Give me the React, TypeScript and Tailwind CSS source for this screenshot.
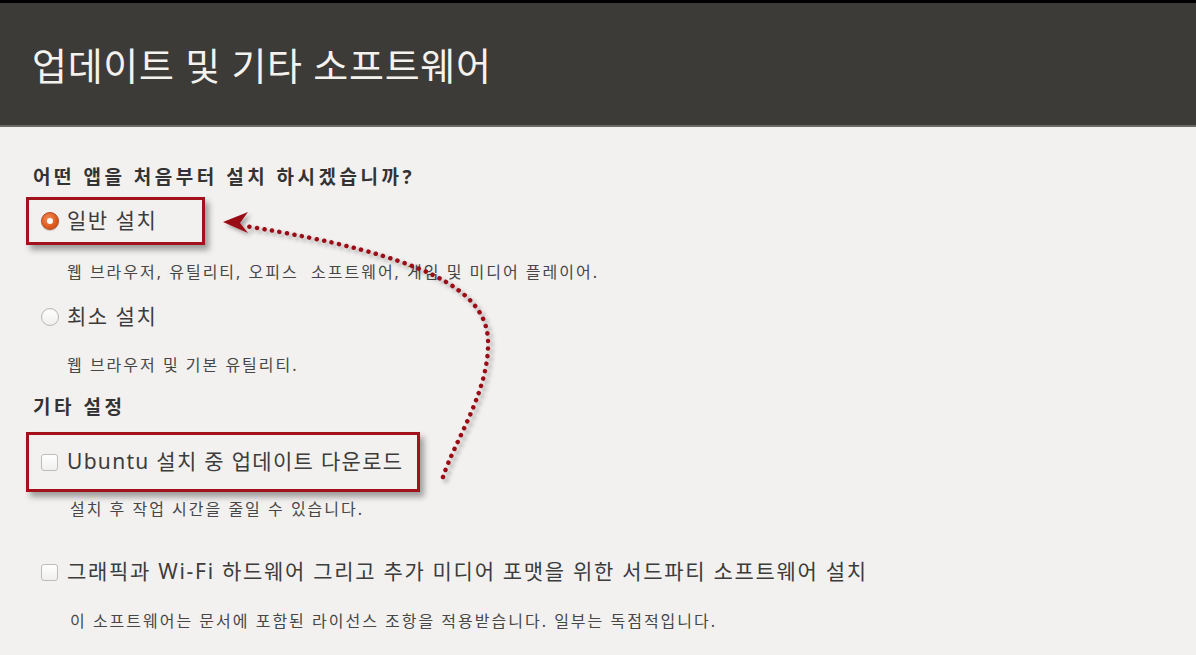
import React from "react";

const FONT = { fontFamily: '"Noto Sans", "Noto Sans CJK KR", sans-serif' };

function RadioOn() {
  return (
    <span className="flex h-[18px] w-[18px] shrink-0 items-center justify-center rounded-full border border-[#b8481e] bg-[radial-gradient(circle_at_40%_35%,#f38a55,#dd5a1f_60%,#c0461a)] shadow-[0_1px_1px_rgba(0,0,0,0.2)]">
      <span className="h-[6px] w-[6px] rounded-full bg-white" />
    </span>
  );
}

function RadioOff() {
  return (
    <span className="h-[18px] w-[18px] shrink-0 rounded-full border border-[#b9b8b5] bg-[linear-gradient(#ffffff,#efefee)] shadow-[inset_0_1px_1px_rgba(0,0,0,0.05)]" />
  );
}

function Check() {
  return (
    <span className="h-[17px] w-[17px] shrink-0 rounded-[3px] border border-[#bdbcb9] bg-[linear-gradient(#ffffff,#efefee)]" />
  );
}

export default function App() {
  return (
    <div
      className="relative h-[655px] w-[1196px] overflow-hidden bg-[#f2f1f0] text-[#3c3c3c]"
      style={FONT}
    >
      <header className="flex h-[127px] items-center border-t-[3px] border-b-[2px] border-t-black border-b-[#6a6965] bg-[#3c3b37] pl-[32px]">
        <h1 className="mt-[2px] text-[38px] font-normal tracking-[0.7px] text-[#f4f2ee]">
          업데이트 및 기타 소프트웨어
        </h1>
      </header>

      <main className="flex flex-col pl-[33px]">
        <div className="mt-[38px] flex h-[24px] items-center whitespace-nowrap text-[19px] font-bold tracking-[3.5px] text-[#333]">
          어떤 앱을 처음부터 설치 하시겠습니까?
        </div>

        <div className="ml-[-7px] mt-[8px] flex h-[48px] w-[179px] items-center gap-[8px] border-[3px] border-[#a3111c] pl-[12px] shadow-[4px_5px_6px_rgba(0,0,0,0.35)]">
          <RadioOn />
          <span className="text-[21px] tracking-[1.5px]">일반 설치</span>
        </div>

        <div className="ml-[34px] mt-[15px] flex h-[24px] items-center whitespace-nowrap text-[16px] tracking-[2px] text-[#474747]">
          웹 브라우저, 유틸리티, 오피스&nbsp; 소프트웨어, 게임 및 미디어 플레이어.
        </div>

        <div className="ml-[8px] mt-[21px] flex h-[24px] items-center gap-[8px]">
          <RadioOff />
          <span className="text-[21px] tracking-[1.5px]">최소 설치</span>
        </div>

        <div className="ml-[34px] mt-[24px] flex h-[24px] items-center text-[16px] tracking-[2px] text-[#474747]">
          웹 브라우저 및 기본 유틸리티.
        </div>

        <div className="mt-[18px] flex h-[24px] items-center text-[19px] font-bold tracking-[3.5px] text-[#333]">
          기타 설정
        </div>

        <div className="ml-[-7px] mt-[13px] flex h-[60px] w-[394px] items-center gap-[9px] border-[3px] border-[#a3111c] pl-[12px] shadow-[4px_5px_6px_rgba(0,0,0,0.35)]">
          <Check />
          <span className="whitespace-nowrap text-[21px] tracking-[1.3px]">Ubuntu 설치 중 업데이트 다운로드</span>
        </div>

        <div className="ml-[37px] mt-[5px] flex h-[24px] items-center text-[16px] tracking-[2px] text-[#474747]">
          설치 후 작업 시간을 줄일 수 있습니다.
        </div>

        <div className="ml-[8px] mt-[39px] flex h-[24px] items-center gap-[9px]">
          <Check />
          <span className="whitespace-nowrap text-[21px] tracking-[1.7px]">
            그래픽과 Wi-Fi 하드웨어 그리고 추가 미디어 포맷을 위한 서드파티 소프트웨어 설치
          </span>
        </div>

        <div className="ml-[37px] mt-[25px] flex h-[24px] items-center whitespace-nowrap text-[16px] tracking-[2px] text-[#474747]">
          이 소프트웨어는 문서에 포함된 라이선스 조항을 적용받습니다. 일부는 독점적입니다.
        </div>
      </main>

      <svg
        className="pointer-events-none absolute left-0 top-0"
        width="1196"
        height="655"
        viewBox="0 0 1196 655"
      >
        <defs>
          <filter id="sh" x="-20%" y="-20%" width="140%" height="140%">
            <feDropShadow dx="3" dy="3" stdDeviation="2" floodColor="#000" floodOpacity="0.35" />
          </filter>
        </defs>
        <g filter="url(#sh)">
          <path
            d="M443 477 C455 440 490 390 488 340 C486 290 425 255 245 226"
            fill="none"
            stroke="#9b0d16"
            strokeWidth="4.5"
            strokeLinecap="round"
            strokeDasharray="0.1 7.5"
          />
          <path d="M223 222 L248 212 L240 223 L248 233 Z" fill="#9b0d16" />
        </g>
      </svg>
    </div>
  );
}
